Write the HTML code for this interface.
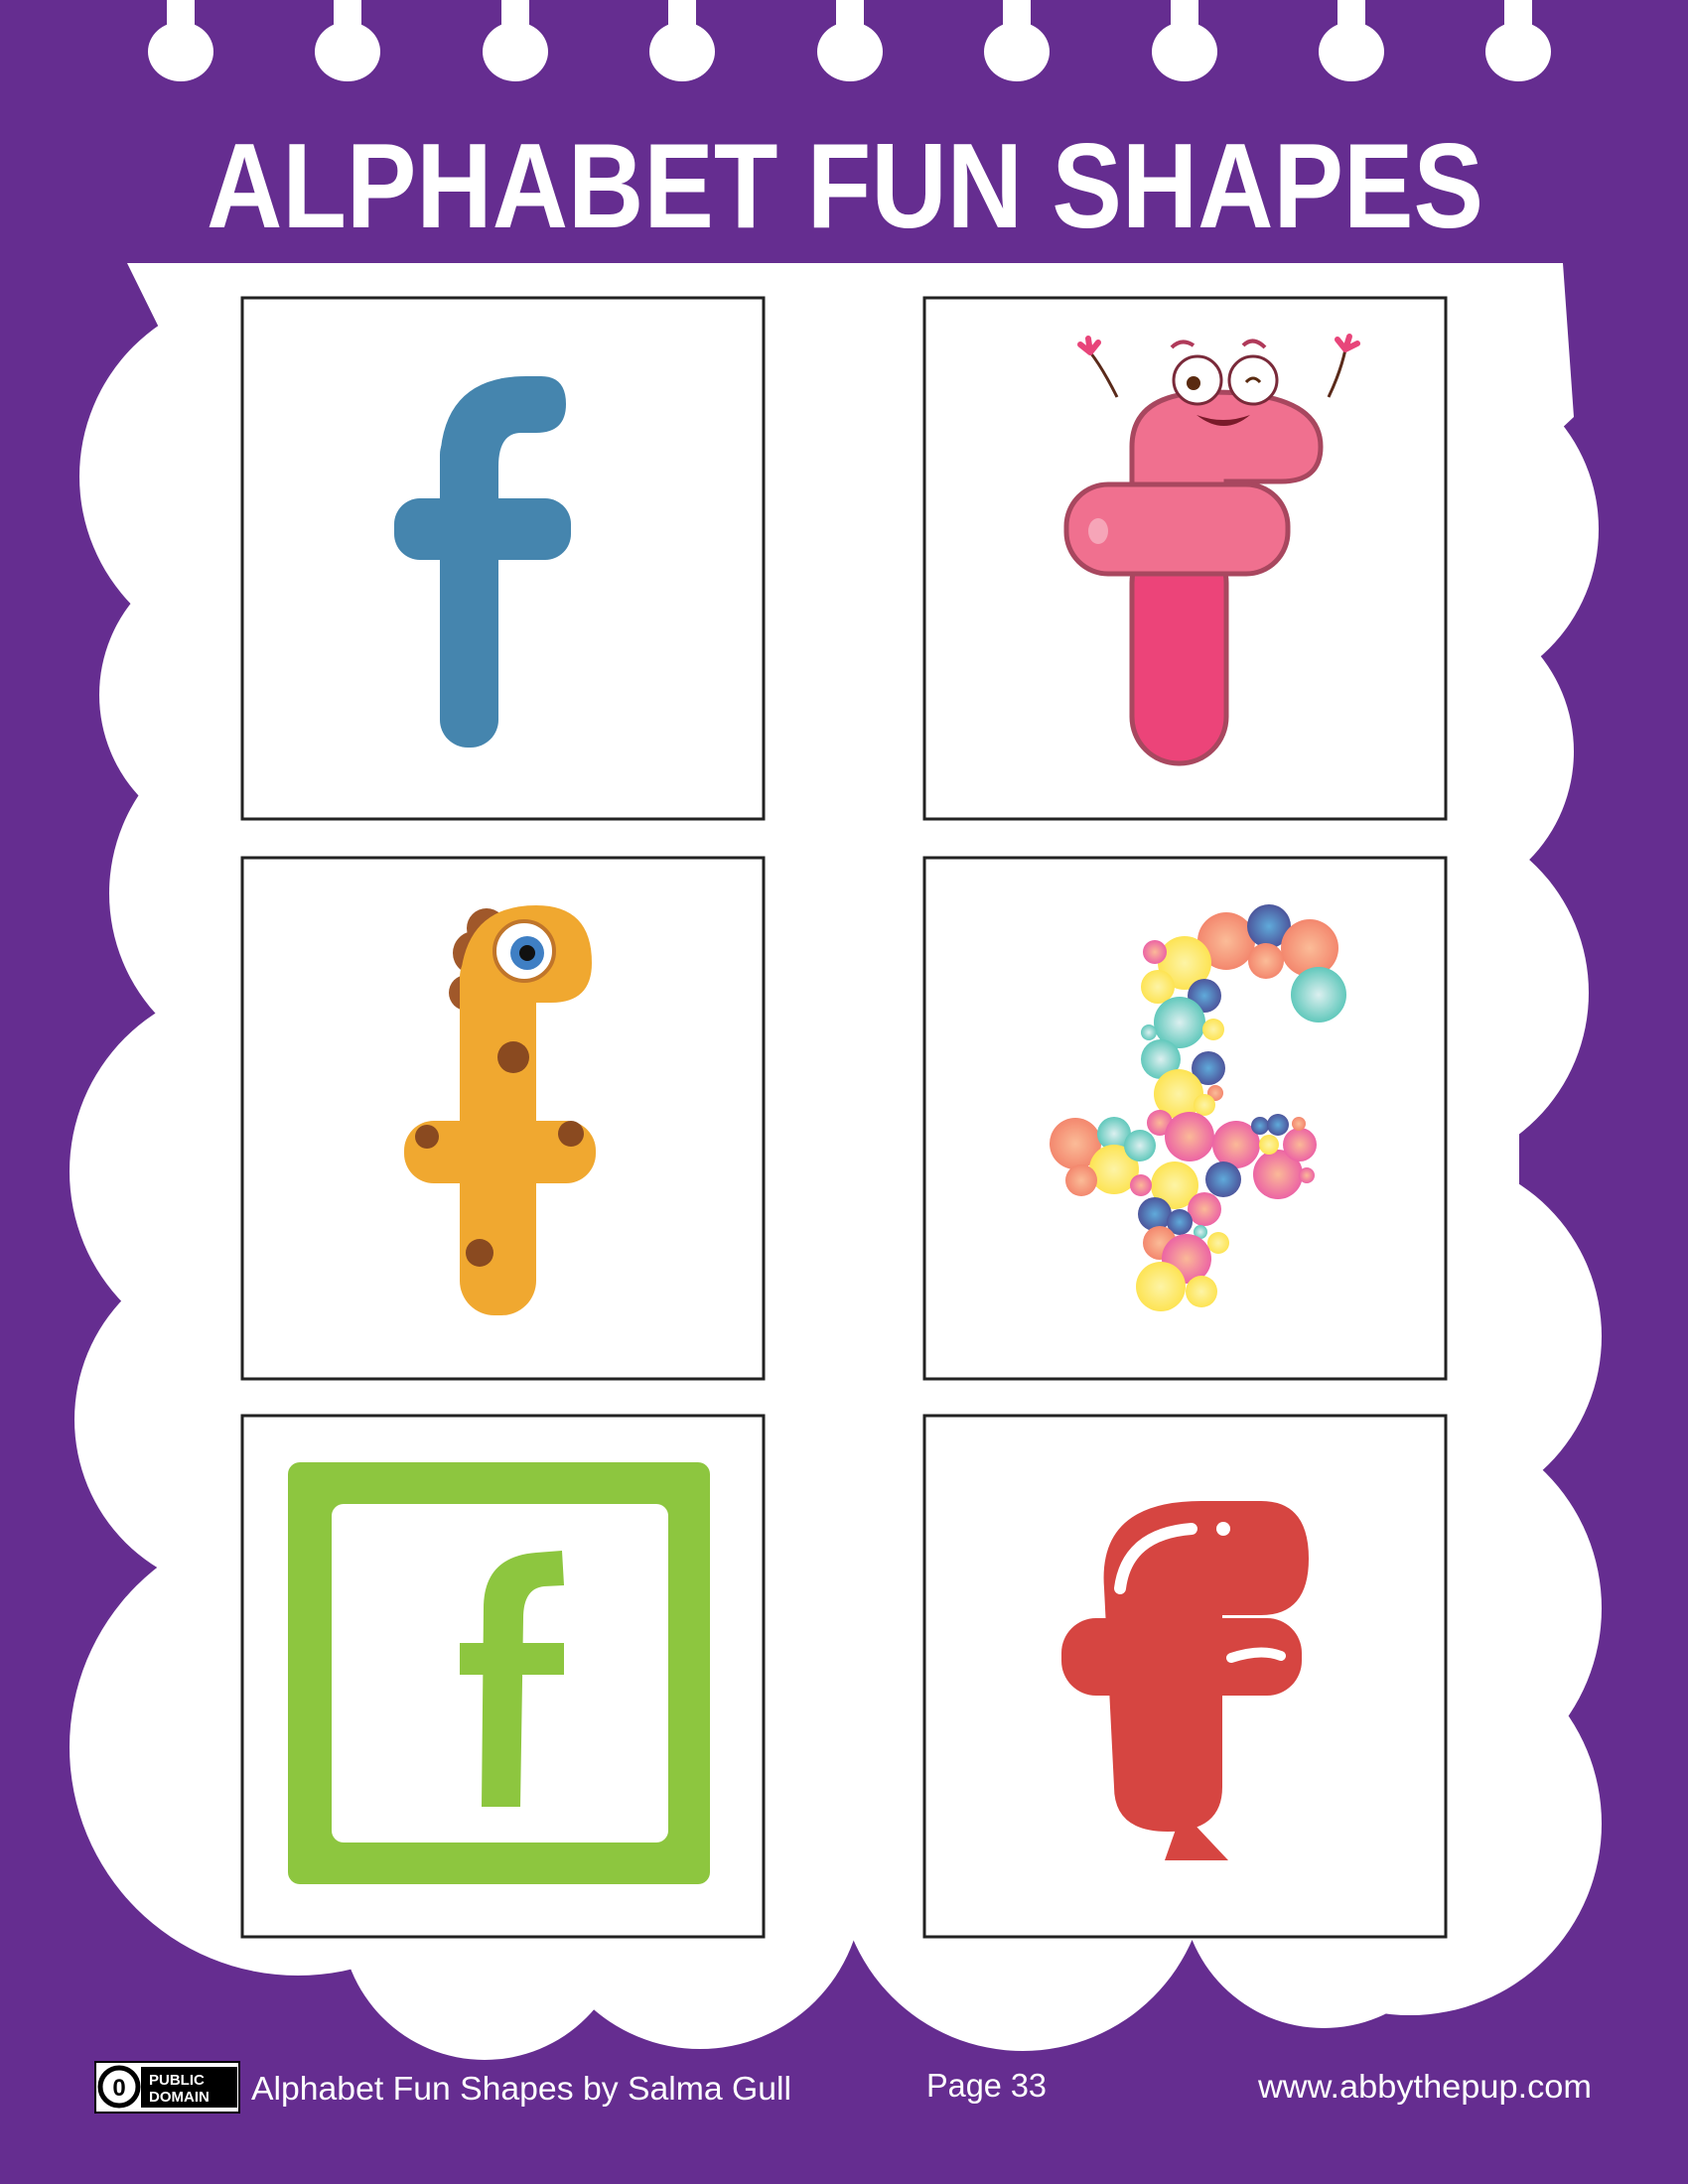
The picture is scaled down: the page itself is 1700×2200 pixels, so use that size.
<!DOCTYPE html>
<html><head><meta charset="utf-8"><style>html,body{margin:0;padding:0;background:#652d90}svg{display:block}</style></head>
<body>
<svg width="1700" height="2200" viewBox="0 0 1700 2200" xmlns="http://www.w3.org/2000/svg" font-family="Liberation Sans, sans-serif">
<defs>
<radialGradient id="go" cx="0.5" cy="0.5" r="0.5"><stop offset="0" stop-color="#fbb38a"/><stop offset="1" stop-color="#f2775a"/></radialGradient>
<radialGradient id="gb" cx="0.5" cy="0.5" r="0.5"><stop offset="0" stop-color="#4a9fd6"/><stop offset="1" stop-color="#343f8f"/></radialGradient>
<radialGradient id="gt" cx="0.5" cy="0.5" r="0.5"><stop offset="0" stop-color="#d7eeee"/><stop offset="1" stop-color="#4cc1b3"/></radialGradient>
<radialGradient id="gy" cx="0.5" cy="0.5" r="0.5"><stop offset="0" stop-color="#fdf39a"/><stop offset="1" stop-color="#fde03c"/></radialGradient>
<radialGradient id="gp" cx="0.5" cy="0.5" r="0.5"><stop offset="0" stop-color="#fbb08a"/><stop offset="1" stop-color="#ea4f98"/></radialGradient>
</defs>
<rect width="1700" height="2200" fill="#652d90"/>
<g fill="#fff">
<g id="h"><rect x="168" y="0" width="28" height="30"/><ellipse cx="182" cy="52" rx="33" ry="30"/></g>
<use href="#h" x="168"/><use href="#h" x="337"/><use href="#h" x="505"/><use href="#h" x="674"/><use href="#h" x="842"/><use href="#h" x="1011"/><use href="#h" x="1179"/><use href="#h" x="1347"/>
</g>
<text x="208" y="229" font-size="122" font-weight="bold" fill="#fff" textLength="1286" lengthAdjust="spacingAndGlyphs">ALPHABET FUN SHAPES</text>
<g fill="#fff">
<polygon points="128,265 1574,265 1585,420 1500,500 200,500 165,340"/>
<rect x="180" y="265" width="1350" height="1660"/>
<circle cx="265" cy="480" r="185"/><circle cx="250" cy="700" r="150"/><circle cx="290" cy="900" r="180"/>
<circle cx="260" cy="1180" r="190"/><circle cx="250" cy="1430" r="175"/><circle cx="300" cy="1760" r="230"/>
<circle cx="1440" cy="533" r="170"/><circle cx="1430" cy="757" r="155"/><circle cx="1420" cy="1000" r="180"/>
<circle cx="1430" cy="1346" r="183"/><circle cx="1420" cy="1620" r="193"/><circle cx="1420" cy="1837" r="193"/>
<circle cx="488" cy="1930" r="145"/><circle cx="705" cy="1900" r="164"/><circle cx="1030" cy="1880" r="186"/><circle cx="1333" cy="1900" r="143"/>
</g>
<g fill="#fff" stroke="#222" stroke-width="3">
<rect x="244" y="300" width="525" height="525"/><rect x="931" y="300" width="525" height="525"/>
<rect x="244" y="864" width="525" height="525"/><rect x="931" y="864" width="525" height="525"/>
<rect x="244" y="1426" width="525" height="525"/><rect x="931" y="1426" width="525" height="525"/>
</g>
<g fill="#4585ae">
<rect x="443" y="430" width="59" height="323" rx="28"/>
<rect x="397" y="502" width="178" height="62" rx="26"/>
<path d="M443 470 Q443 379 530 379 L545 379 Q570 379 570 407 Q570 436 540 436 L525 436 Q502 436 502 470 Z"/>
</g>
<g>
<path d="M1125 400 Q1110 370 1098 355" stroke="#5a2a1a" stroke-width="3" fill="none"/>
<path d="M1338 400 Q1350 375 1355 352" stroke="#5a2a1a" stroke-width="3" fill="none"/>
<path d="M1098 355 l-10 -8 m10 8 l-2 -14 m2 14 l8 -10" stroke="#e8457a" stroke-width="6" fill="none" stroke-linecap="round"/>
<path d="M1355 352 l-8 -10 m8 10 l4 -13 m-4 13 l12 -6" stroke="#e8457a" stroke-width="6" fill="none" stroke-linecap="round"/>
<path d="M1140 560 L1140 450 Q1140 395 1220 395 Q1330 395 1330 450 Q1330 485 1290 485 L1235 485 L1235 560" fill="#f0708f" stroke="#a8475f" stroke-width="5"/>
<rect x="1140" y="540" width="95" height="229" rx="47" fill="#ec4479" stroke="#a8475f" stroke-width="5"/>
<rect x="1074" y="488" width="223" height="90" rx="42" fill="#f0708f" stroke="#a8475f" stroke-width="5"/>
<ellipse cx="1106" cy="535" rx="10" ry="13" fill="#f6a5b8"/>
<circle cx="1206" cy="383" r="24" fill="#fff" stroke="#7a2a3a" stroke-width="3"/>
<circle cx="1262" cy="383" r="24" fill="#fff" stroke="#7a2a3a" stroke-width="3"/>
<circle cx="1202" cy="386" r="7" fill="#5a2a10"/>
<path d="M1255 385 q7 -8 14 0" stroke="#5a2a10" stroke-width="3" fill="none"/>
<path d="M1180 350 q10 -10 22 -2 M1252 348 q10 -10 22 2" stroke="#b03a5a" stroke-width="4" fill="none"/>
<path d="M1205 418 q28 22 54 0 q-27 10 -54 0z" fill="#7a1a2a"/>
</g>
<g fill="#f0a830">
<circle cx="478" cy="960" r="22" fill="#a0582a"/><circle cx="470" cy="1000" r="18" fill="#a0582a"/><circle cx="490" cy="935" r="20" fill="#a0582a"/>
<rect x="463" y="950" width="77" height="375" rx="35"/>
<path d="M463 1000 Q463 912 540 912 Q596 912 596 970 Q596 1010 555 1010 L463 1010 Z"/>
<rect x="407" y="1129" width="193" height="63" rx="30"/>
<circle cx="528" cy="958" r="30" fill="#fff" stroke="#c0752a" stroke-width="4"/>
<circle cx="531" cy="960" r="17" fill="#3f7fc4"/><circle cx="531" cy="960" r="8" fill="#111"/>
<circle cx="517" cy="1065" r="16" fill="#8a4a20"/><circle cx="430" cy="1145" r="12" fill="#8a4a20"/><circle cx="575" cy="1142" r="13" fill="#8a4a20"/><circle cx="483" cy="1262" r="14" fill="#8a4a20"/>
</g>
<g opacity="0.88">
<circle cx="1235" cy="948" r="29" fill="url(#go)"/><circle cx="1278" cy="933" r="22" fill="url(#gb)"/><circle cx="1319" cy="955" r="29" fill="url(#go)"/>
<circle cx="1275" cy="968" r="18" fill="url(#go)"/><circle cx="1328" cy="1002" r="28" fill="url(#gt)"/><circle cx="1193" cy="970" r="27" fill="url(#gy)"/>
<circle cx="1163" cy="959" r="12" fill="url(#gp)"/><circle cx="1166" cy="994" r="17" fill="url(#gy)"/><circle cx="1213" cy="1003" r="17" fill="url(#gb)"/>
<circle cx="1188" cy="1030" r="26" fill="url(#gt)"/><circle cx="1222" cy="1037" r="11" fill="url(#gy)"/><circle cx="1157" cy="1040" r="8" fill="url(#gt)"/>
<circle cx="1169" cy="1067" r="20" fill="url(#gt)"/><circle cx="1217" cy="1076" r="17" fill="url(#gb)"/><circle cx="1187" cy="1102" r="25" fill="url(#gy)"/>
<circle cx="1224" cy="1101" r="8" fill="url(#go)"/><circle cx="1213" cy="1113" r="11" fill="url(#gy)"/><circle cx="1083" cy="1152" r="26" fill="url(#go)"/>
<circle cx="1122" cy="1142" r="17" fill="url(#gt)"/><circle cx="1122" cy="1178" r="25" fill="url(#gy)"/><circle cx="1089" cy="1189" r="16" fill="url(#go)"/>
<circle cx="1148" cy="1154" r="16" fill="url(#gt)"/><circle cx="1168" cy="1131" r="13" fill="url(#gp)"/><circle cx="1198" cy="1145" r="25" fill="url(#gp)"/>
<circle cx="1245" cy="1153" r="24" fill="url(#gp)"/><circle cx="1183" cy="1194" r="24" fill="url(#gy)"/><circle cx="1232" cy="1188" r="18" fill="url(#gb)"/>
<circle cx="1287" cy="1183" r="25" fill="url(#gp)"/><circle cx="1309" cy="1153" r="17" fill="url(#gp)"/><circle cx="1269" cy="1134" r="9" fill="url(#gb)"/>
<circle cx="1287" cy="1133" r="11" fill="url(#gb)"/><circle cx="1308" cy="1132" r="7" fill="url(#go)"/><circle cx="1149" cy="1194" r="11" fill="url(#gp)"/>
<circle cx="1316" cy="1184" r="8" fill="url(#gp)"/><circle cx="1213" cy="1218" r="17" fill="url(#gp)"/><circle cx="1163" cy="1223" r="17" fill="url(#gb)"/>
<circle cx="1188" cy="1231" r="13" fill="url(#gb)"/><circle cx="1209" cy="1241" r="7" fill="url(#gt)"/><circle cx="1227" cy="1252" r="11" fill="url(#gy)"/>
<circle cx="1168" cy="1252" r="17" fill="url(#go)"/><circle cx="1195" cy="1268" r="25" fill="url(#gp)"/><circle cx="1169" cy="1296" r="25" fill="url(#gy)"/>
<circle cx="1210" cy="1301" r="16" fill="url(#gy)"/><circle cx="1278" cy="1153" r="10" fill="url(#gy)"/>
</g>
<rect x="290" y="1473" width="425" height="425" rx="12" fill="#8dc63f"/>
<rect x="334" y="1515" width="339" height="341" rx="12" fill="#fff"/>
<g fill="#8dc63f">
<path d="M485 1820 L487 1620 Q487 1568 540 1564 L566 1562 L568 1597 L548 1598 Q527 1600 527 1630 L524 1820 Z"/>
<rect x="463" y="1655" width="105" height="32"/>
</g>
<g fill="#d64541">
<path d="M1122 1800 L1112 1600 Q1105 1512 1210 1512 L1270 1512 Q1318 1512 1318 1570 Q1318 1627 1270 1627 L1231 1627 L1231 1800 Q1231 1845 1176 1845 Q1122 1845 1122 1800 Z"/>
<rect x="1069" y="1630" width="242" height="78" rx="35"/>
<path d="M1185 1840 L1173 1874 L1237 1874 L1205 1840 Z"/>
</g>
<path d="M1128 1600 Q1135 1545 1200 1540" stroke="#fff" stroke-width="12" fill="none" stroke-linecap="round"/>
<circle cx="1232" cy="1540" r="7" fill="#fff"/>
<path d="M1240 1670 Q1270 1660 1290 1668" stroke="#fff" stroke-width="10" fill="none" stroke-linecap="round"/>
<rect x="96" y="2077" width="145" height="51" fill="#fff" stroke="#000" stroke-width="2"/>
<rect x="142" y="2082" width="97" height="41" fill="#000"/>
<circle cx="120" cy="2102" r="19" fill="#fff" stroke="#000" stroke-width="5"/>
<text x="120" y="2111" font-size="24" font-weight="bold" text-anchor="middle">0</text>
<text x="150" y="2100" font-size="15" font-weight="bold" fill="#fff">PUBLIC</text>
<text x="150" y="2117" font-size="15" font-weight="bold" fill="#fff">DOMAIN</text>
<g fill="#fff" font-size="33">
<text x="253" y="2115" textLength="544" lengthAdjust="spacingAndGlyphs">Alphabet Fun Shapes by Salma Gull</text>
<text x="933" y="2112" textLength="121" lengthAdjust="spacingAndGlyphs">Page 33</text>
<text x="1267" y="2113" textLength="336" lengthAdjust="spacingAndGlyphs">www.abbythepup.com</text>
</g>
</svg>
</body></html>
